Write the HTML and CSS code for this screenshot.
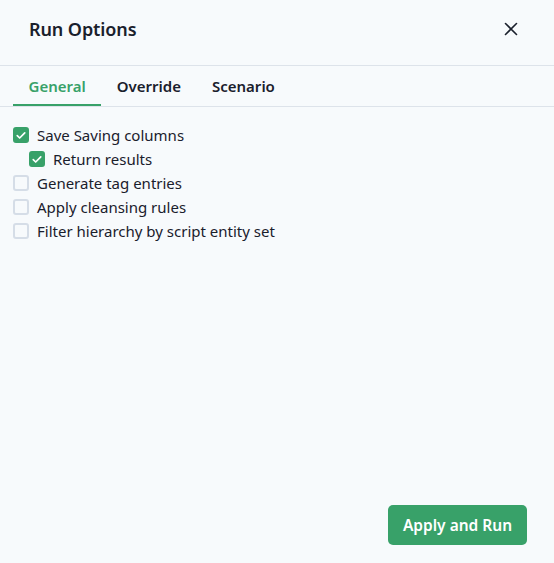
FILE: index.html
```html
<!DOCTYPE html>
<html>
<head>
<meta charset="utf-8">
<link rel="stylesheet" href="styles.css">
</head>
<body>
<div class="modal">
  <div class="header">
    <h2 class="title">Run Options</h2>
    <button class="close" aria-label="Close">
      <svg width="14" height="14" viewBox="0 0 14 14"><path d="M1.5 1.5 L12.5 12.5 M12.5 1.5 L1.5 12.5" stroke="#1a202c" stroke-width="1.6" stroke-linecap="round"/></svg>
    </button>
  </div>
  <div class="tabs">
    <div class="tab active">General</div>
    <div class="tab">Override</div>
    <div class="tab">Scenario</div>
  </div>
  <div class="body">
    <label class="row"><span class="box checked"><svg viewBox="0 0 12 10" width="10" height="9"><path d="M1.5 5.2 L4.4 8 L10.5 1.8" fill="none" stroke="#fff" stroke-width="2" stroke-linecap="round" stroke-linejoin="round"/></svg></span>Save Saving columns</label>
    <label class="row indent"><span class="box checked"><svg viewBox="0 0 12 10" width="10" height="9"><path d="M1.5 5.2 L4.4 8 L10.5 1.8" fill="none" stroke="#fff" stroke-width="2" stroke-linecap="round" stroke-linejoin="round"/></svg></span>Return results</label>
    <label class="row"><span class="box"></span>Generate tag entries</label>
    <label class="row"><span class="box"></span>Apply cleansing rules</label>
    <label class="row"><span class="box"></span>Filter hierarchy by script entity set</label>
  </div>
  <div class="footer">
    <button class="primary">Apply and Run</button>
  </div>
</div>
</body>
</html>
```

FILE: styles.css
```css
html, body {
  margin: 0;
  padding: 0;
  height: 100%;
}
body {
  background: #f7fafc;
  color: #1a202c;
  font-family: "Noto Sans", "Open Sans", sans-serif;
}
.modal {
  display: flex;
  flex-direction: column;
  height: 100%;
}
.header {
  height: 66px;
  display: flex;
  align-items: flex-start;
  justify-content: space-between;
  padding: 0 27px 0 29px;
  border-bottom: 1px solid #dde3ea;
  box-sizing: border-box;
}
.title {
  margin: 16px 0 0;
  line-height: 26px;
  font-size: 18px;
  font-weight: 600;
  letter-spacing: -0.1px;
}
.close {
  margin-top: 13px;
  width: 32px;
  height: 32px;
  border: none;
  background: transparent;
  display: flex;
  align-items: center;
  justify-content: center;
  padding: 0;
}
.tabs {
  display: flex;
  padding-left: 13px;
  border-bottom: 1px solid #dde3ea;
}
.tab {
  height: 40px;
  box-sizing: border-box;
  padding: 2px 15.5px 0;
  display: flex;
  align-items: center;
  font-size: 15px;
  font-weight: 600;
  border-bottom: 2px solid transparent;
  color: #1a202c;
}
.tab.active {
  color: #38a169;
  border-bottom-color: #38a169;
}
.body {
  flex: 1;
  padding: 16px 13px 0;
  display: flex;
  flex-direction: column;
}
.row {
  height: 24px;
  display: flex;
  align-items: center;
  font-size: 15px;
  color: #1a202c;
}
.row.indent {
  padding-left: 16px;
}
.box {
  width: 16px;
  height: 16px;
  box-sizing: border-box;
  border: 2px solid #d5dde7;
  border-radius: 3px;
  margin-right: 8px;
  display: flex;
  align-items: center;
  justify-content: center;
  flex-shrink: 0;
}
.box.checked {
  background: #38a169;
  border-color: #38a169;
}
.footer {
  display: flex;
  justify-content: flex-end;
  padding: 0 27px 18px;
}
.primary {
  width: 139px;
  height: 40px;
  background: #38a169;
  color: #fff;
  border: none;
  border-radius: 5px;
  font-family: "Noto Sans", "Open Sans", sans-serif;
  font-size: 15.5px;
  font-weight: 600;
}
```
